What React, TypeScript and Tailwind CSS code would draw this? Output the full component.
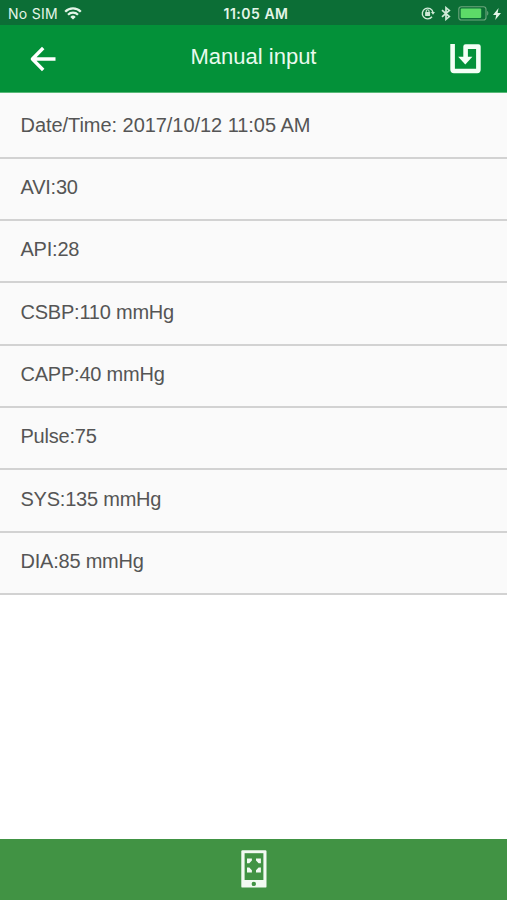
import React from "react";

const readings = [
  "Date/Time: 2017/10/12 11:05 AM",
  "AVI:30",
  "API:28",
  "CSBP:110 mmHg",
  "CAPP:40 mmHg",
  "Pulse:75",
  "SYS:135 mmHg",
  "DIA:85 mmHg",
];

const WifiIcon = () => (
  <svg width="18" height="13" viewBox="0 0 18 13" fill="none" stroke="#e4f5e8">
    <path d="M1.2 4.7a11 11 0 0 1 15.6 0" strokeWidth="2.3" />
    <path d="M4 7.7a7 7 0 0 1 10 0" strokeWidth="2.2" />
    <path d="M9 12.6 6.3 9.9a3.8 3.8 0 0 1 5.4 0z" fill="#e4f5e8" stroke="none" />
  </svg>
);

const RotationLockIcon = () => (
  <svg width="14" height="14" viewBox="0 0 14 14" fill="none" stroke="#cfead6">
    <path d="M11 10.8A5.4 5.4 0 1 1 12 6.4" strokeWidth="1.4" />
    <path d="M9.9 6.1h4.1l-2 2.7z" fill="#cfead6" stroke="none" />
    <rect x="4.1" y="6.1" width="5" height="3.9" rx=".4" fill="#cfead6" stroke="none" />
    <path d="M5.2 6.5V5.1a1.4 1.4 0 0 1 2.8 0v1.4" strokeWidth="1.1" />
  </svg>
);

const BluetoothIcon = () => (
  <svg width="10" height="15" viewBox="0 0 10 15" fill="none" stroke="#cfead6" strokeWidth="1.7">
    <path d="M1 4.2 8.3 10.6 5 13.3V1.7l3.3 2.7L1 10.8" />
  </svg>
);

const BatteryIcon = () => (
  <svg width="31" height="15" viewBox="0 0 31 15">
    <rect x=".8" y=".7" width="27.2" height="13.3" rx="2.6" fill="none" stroke="#6da77e" strokeWidth="1.1" />
    <rect x="2.7" y="2.6" width="20.5" height="9.5" rx="1" fill="#5ddb68" />
    <path d="M29.2 5.1c1.5.5 1.5 4 0 4.5z" fill="#6da77e" />
  </svg>
);

const BoltIcon = () => (
  <svg width="8" height="12" viewBox="0 0 8 12" fill="#e4f5e8">
    <path d="M5.6 0 0 6.9h3.2L2.2 12 8 5H4.6z" />
  </svg>
);

const BackIcon = () => (
  <svg width="26" height="26" viewBox="0 0 26 26" fill="none" stroke="#fff" strokeWidth="3.4">
    <path d="M13.2 2 2.4 13l10.8 11M3 13h22.5" strokeLinejoin="round" />
  </svg>
);

const SaveIcon = () => (
  <svg width="31" height="30" viewBox="0 0 31 30" fill="none" stroke="#f4fff6">
    <path d="M2.6 0v25.6q0 1.4 1.4 1.4h23.2q1.2 0 1.2-1.4V2.6H15.6V14" strokeWidth="4.6" strokeLinejoin="round" />
    <path d="M8.2 12.7h14.2l-7.1 7.9z" fill="#f4fff6" stroke="none" />
  </svg>
);

const PhoneScanIcon = () => (
  <svg width="26" height="38" viewBox="0 0 26 38">
    <rect x=".3" y=".2" width="25.2" height="37.4" rx="1.2" fill="#f2faf2" />
    <rect x="3.6" y="3.2" width="18.8" height="26.8" fill="#419344" />
    <circle cx="12.8" cy="33.9" r="2.2" fill="#419344" />
    <path
      d="M6 8.4h4.9v2.2l-2.6 2.7H6zM19.9 8.4H15v2.2l2.6 2.7h2.3zM6 22.4h4.9v-2.2l-2.6-2.7H6zM19.9 22.4H15v-2.2l2.6-2.7h2.3z"
      fill="#f2faf2"
    />
  </svg>
);

const StatusBar = () => (
  <div className="flex h-[25px] items-center bg-[#0c6e36] text-[#e4f5e8]">
    {/* Carrier */}
    <div className="flex flex-1 items-center pt-[2px] pl-2">
      <span className="w-[56px] text-[14px] leading-5 tracking-[0.3px] font-['Inter',sans-serif]">
        No SIM
      </span>
      <WifiIcon />
    </div>
    {/* Clock */}
    <span className="pt-[2px] pl-[3px] text-[14px] leading-5 font-semibold tracking-[0.5px] font-['Inter',sans-serif]">
      11:05 AM
    </span>
    {/* Indicators */}
    <div className="flex flex-1 items-center justify-end pt-0.5 pr-[6px]">
      <div className="pb-[2px]">
        <RotationLockIcon />
      </div>
      <div className="mr-[7px] ml-[6px]">
        <BluetoothIcon />
      </div>
      <BatteryIcon />
      <div className="ml-1">
        <BoltIcon />
      </div>
    </div>
  </div>
);

const Header = () => (
  <header className="flex h-[68px] items-center justify-between border-b border-[#58b978] bg-[#039139] pr-[26px] pl-[30px]">
    <button className="w-[27px]" aria-label="Back">
      <BackIcon />
    </button>
    <h1 className="pb-1 text-[22px] leading-7 text-[#e9faee]">Manual input</h1>
    <button aria-label="Save">
      <SaveIcon />
    </button>
  </header>
);

const App = () => {
  return (
    <div className="flex h-[900px] w-[507px] flex-col bg-white font-['Liberation_Sans',sans-serif]">
      <StatusBar />
      <Header />
      <ul>
        {readings.map((item, i) => (
          <li
            className={
              (i === 0
                ? "h-[65.5px] pt-[19px] tracking-[-0.05px]"
                : "h-[62.35px] pt-[15.6px] tracking-[-0.22px]") +
              " border-b-2 border-[#d2d2d2] bg-[#fafafa] pl-[20.5px] text-[20px] leading-[26px] text-[#555]"
            }
            key={item}
          >
            {item}
          </li>
        ))}
      </ul>
      {/* Bottom bar */}
      <footer className="mt-auto flex h-[61px] items-center justify-center bg-[#419344]">
        <button className="pb-[1px]" aria-label="Scan">
          <PhoneScanIcon />
        </button>
      </footer>
    </div>
  );
};

export default App;
